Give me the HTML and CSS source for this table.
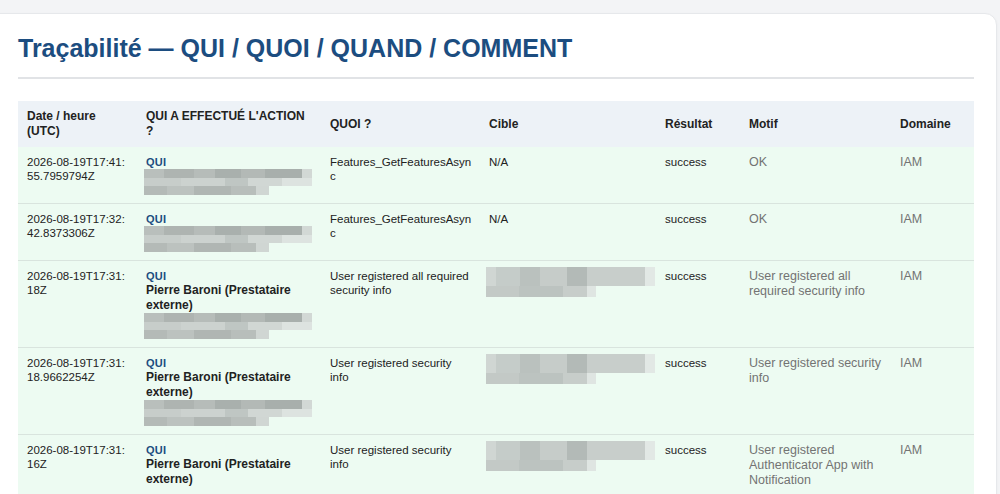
FILE: index.html
```html
<!DOCTYPE html>
<html lang="fr">
<head>
<meta charset="utf-8">
<title>Traçabilité</title>
<link rel="stylesheet" href="styles.css">
</head>
<body>
<div class="page">
  <section class="card">
    <h1 class="title">Traçabilité — QUI / QUOI / QUAND / COMMENT</h1>
    <table class="audit">
      <colgroup>
        <col class="c-date"><col class="c-qui"><col class="c-quoi"><col class="c-cible"><col class="c-res"><col class="c-motif"><col class="c-dom">
      </colgroup>
      <thead>
        <tr>
          <th>Date / heure (UTC)</th>
          <th>QUI A EFFECTUÉ L'ACTION ?</th>
          <th>QUOI ?</th>
          <th>Cible</th>
          <th>Résultat</th>
          <th>Motif</th>
          <th>Domaine</th>
        </tr>
      </thead>
      <tbody>
        <tr>
          <td><span class="nw">2026-08-19T17:41:</span><wbr><span class="nw">55.7959794Z</span></td>
          <td><div class="qui">QUI</div><div class="blur blur-email"><span class="b1"></span><span class="b2"></span><span class="b3"></span></div></td>
          <td class="wrap">Features_GetFeaturesAsync</td>
          <td>N/A</td>
          <td>success</td>
          <td class="motif">OK</td>
          <td class="dom">IAM</td>
        </tr>
        <tr>
          <td><span class="nw">2026-08-19T17:32:</span><wbr><span class="nw">42.8373306Z</span></td>
          <td><div class="qui">QUI</div><div class="blur blur-email"><span class="b1"></span><span class="b2"></span><span class="b3"></span></div></td>
          <td class="wrap">Features_GetFeaturesAsync</td>
          <td>N/A</td>
          <td>success</td>
          <td class="motif">OK</td>
          <td class="dom">IAM</td>
        </tr>
        <tr>
          <td><span class="nw">2026-08-19T17:31:</span><wbr><span class="nw">18Z</span></td>
          <td><div class="qui">QUI</div><div class="name">Pierre Baroni (Prestataire externe)</div><div class="blur blur-email"><span class="b1"></span><span class="b2"></span><span class="b3"></span></div></td>
          <td>User registered all required security info</td>
          <td><div class="blur blur-cible"><span class="c1"></span><span class="c2"></span></div></td>
          <td>success</td>
          <td class="motif">User registered all required security info</td>
          <td class="dom">IAM</td>
        </tr>
        <tr>
          <td><span class="nw">2026-08-19T17:31:</span><wbr><span class="nw">18.9662254Z</span></td>
          <td><div class="qui">QUI</div><div class="name">Pierre Baroni (Prestataire externe)</div><div class="blur blur-email"><span class="b1"></span><span class="b2"></span><span class="b3"></span></div></td>
          <td>User registered security info</td>
          <td><div class="blur blur-cible"><span class="c1"></span><span class="c2"></span></div></td>
          <td>success</td>
          <td class="motif">User registered security info</td>
          <td class="dom">IAM</td>
        </tr>
        <tr>
          <td><span class="nw">2026-08-19T17:31:</span><wbr><span class="nw">16Z</span></td>
          <td><div class="qui">QUI</div><div class="name">Pierre Baroni (Prestataire externe)</div></td>
          <td>User registered security info</td>
          <td><div class="blur blur-cible"><span class="c1"></span><span class="c2"></span></div></td>
          <td>success</td>
          <td class="motif">User registered Authenticator App with Notification</td>
          <td class="dom">IAM</td>
        </tr>
      </tbody>
    </table>
  </section>
</div>
</body>
</html>
```

FILE: styles.css
```css
html, body {
  margin: 0;
  padding: 0;
  background: #f3f4f6;
  font-family: "Liberation Sans", Arial, sans-serif;
  color: #222;
  overflow: hidden;
}

.page {
  padding: 13px 3px 0 0;
}

.card {
  margin-left: -12px;
  background: #fff;
  border: 1px solid #e6e8eb;
  border-radius: 12px;
  padding: 19px 22px 40px 29px;
  box-shadow: 0 1px 3px rgba(0, 0, 0, 0.04);
}

.title {
  margin: 0;
  font-size: 25px;
  line-height: 30px;
  font-weight: 700;
  color: #1c4d80;
  padding-bottom: 14px;
  border-bottom: 2px solid #e1e3e6;
}

.audit {
  margin-top: 22px;
  width: 956px;
  table-layout: fixed;
  border-collapse: collapse;
  font-size: 11.5px;
  line-height: 14px;
}

.c-date { width: 119px; }
.c-qui { width: 184px; }
.c-quoi { width: 159px; }
.c-cible { width: 176px; }
.c-res { width: 84px; }
.c-motif { width: 151px; }
.c-dom { width: 83px; }

.audit th {
  background: #edf2f7;
  text-align: left;
  vertical-align: middle;
  font-weight: 700;
  font-size: 12px;
  line-height: 15px;
  color: #222;
  padding: 8px 8px 8px 9px;
  height: 30px;
}

.audit td {
  background: #edfbf2;
  vertical-align: top;
  padding: 8px 8px 8px 9px;
  border-bottom: 1px solid #d9e4de;
  color: #222;
}

.nw {
  white-space: nowrap;
}

.audit td.wrap {
  word-break: break-all;
}

.qui {
  color: #1c4d80;
  font-weight: 700;
  font-size: 11px;
  letter-spacing: 0.3px;
}

.name {
  font-weight: 700;
  font-size: 12px;
  line-height: 15px;
  color: #222;
}

.audit td.motif,
.audit td.dom {
  color: #737373;
  font-size: 12.5px;
  line-height: 15px;
}

.blur {
  display: flex;
  flex-direction: column;
}

.blur span {
  display: block;
}

.blur-email {
  margin-left: -2px;
}

.blur-email .b1 {
  width: 168px;
  height: 9px;
  background: linear-gradient(90deg, #b9bfbc 0 12%, #aeb4b1 12% 30%, #b6bcb9 30% 42%, #a9b0ad 42% 58%, #b3b9b6 58% 72%, #a8afac 72% 94%, #d2d8d5 94% 100%);
}

.blur-email .b2 {
  width: 168px;
  height: 8px;
  background: linear-gradient(90deg, #c7cdca 0 22%, #ccd2cf 22% 48%, #bfc6c3 48% 62%, #d1d7d4 62% 82%, #dde3e0 82% 100%);
}

.blur-email .b3 {
  width: 125px;
  height: 9px;
  background: linear-gradient(90deg, #b4bab7 0 18%, #bcc2bf 18% 40%, #b0b6b3 40% 70%, #b8bebb 70% 90%, #d0d6d3 90% 100%);
}

.blur-cible {
  margin-left: -3px;
  margin-top: -2px;
}

.blur-cible .c1 {
  width: 169px;
  height: 19px;
  background: linear-gradient(90deg, #d0d6d3 0 6%, #c5ccc9 6% 20%, #bac1be 20% 32%, #c6ccc9 32% 48%, #b3bab7 48% 60%, #c8cecb 60% 94%, #e2e8e5 94% 100%);
}

.blur-cible .c2 {
  width: 110px;
  height: 11px;
  background: linear-gradient(90deg, #c3c9c6 0 30%, #bcc3c0 30% 70%, #c7cdca 70% 92%, #dfe5e2 92% 100%);
}
```
